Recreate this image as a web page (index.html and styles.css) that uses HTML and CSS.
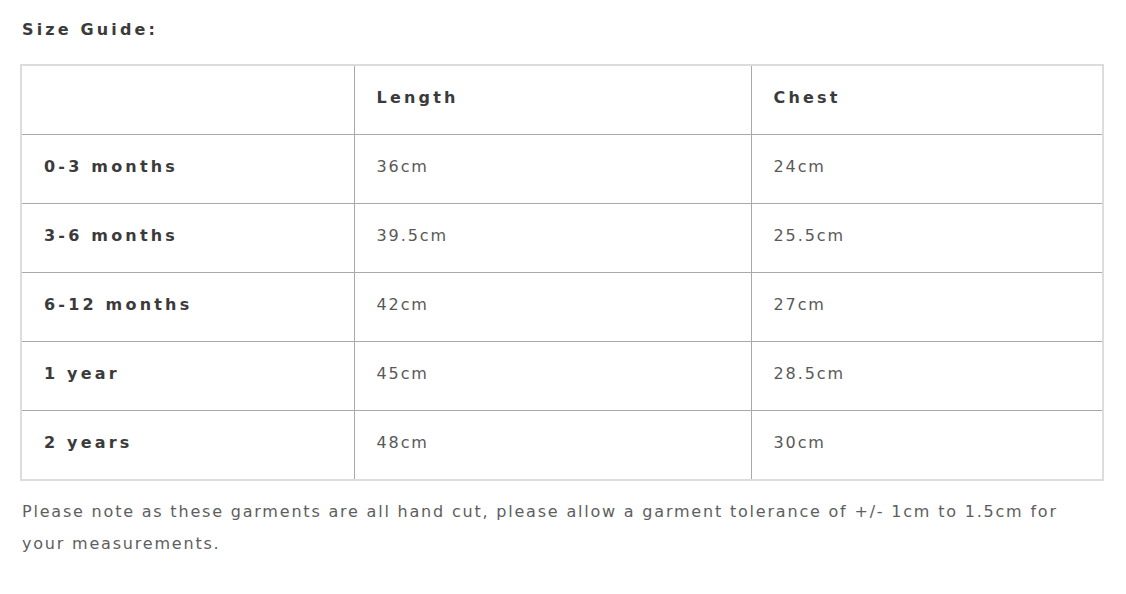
FILE: index.html
```html
<!DOCTYPE html>
<html>
<head>
<meta charset="utf-8">
<link rel="stylesheet" href="styles.css">
</head>
<body>
<div class="page">
  <h2 class="title">Size Guide:</h2>
  <table class="size-table">
    <colgroup>
      <col class="c1"><col class="c2"><col class="c3">
    </colgroup>
    <thead>
      <tr><th></th><th>Length</th><th>Chest</th></tr>
    </thead>
    <tbody>
      <tr><th>0-3 months</th><td>36cm</td><td>24cm</td></tr>
      <tr><th>3-6 months</th><td>39.5cm</td><td>25.5cm</td></tr>
      <tr><th>6-12 months</th><td>42cm</td><td>27cm</td></tr>
      <tr><th>1 year</th><td>45cm</td><td>28.5cm</td></tr>
      <tr><th>2 years</th><td>48cm</td><td>30cm</td></tr>
    </tbody>
  </table>
  <p class="note">Please note as these garments are all hand cut, please allow a garment tolerance of +/- 1cm to 1.5cm for your measurements.</p>
</div>
</body>
</html>
```

FILE: styles.css
```css
html, body {
  margin: 0;
  padding: 0;
  background: #ffffff;
}
body {
  font-family: "DejaVu Sans", "Noto Sans", sans-serif;
  color: #555555;
}
.page {
  padding: 18px 22px 0 20px;
  width: 1084px;
}
.title {
  margin: 0 0 0 2px;
  font-size: 16px;
  line-height: 24px;
  font-weight: 700;
  letter-spacing: 3.15px;
  color: #3b3b3b;
}
.size-table {
  margin-top: 22px;
  width: 1084px;
  border-collapse: collapse;
  border: 2px solid #dcdcdc;
  table-layout: fixed;
}
.c1 { width: 333px; }
.c2 { width: 397px; }
.c3 { width: 352px; }
.size-table th,
.size-table td {
  border: 1px solid #a9a9a9;
  padding: 20px 22px 24px;
  height: 24px;
  line-height: 24px;
  font-size: 16px;
  text-align: left;
  vertical-align: middle;
}
.size-table th {
  font-weight: 700;
  letter-spacing: 3.2px;
  color: #3b3b3b;
}
.size-table td {
  font-weight: 400;
  letter-spacing: 1.9px;
  color: #595959;
}
.note {
  margin: 15px 0 0 2px;
  font-size: 16px;
  line-height: 32px;
  letter-spacing: 1.8px;
  color: #5e5e5e;
}
```
